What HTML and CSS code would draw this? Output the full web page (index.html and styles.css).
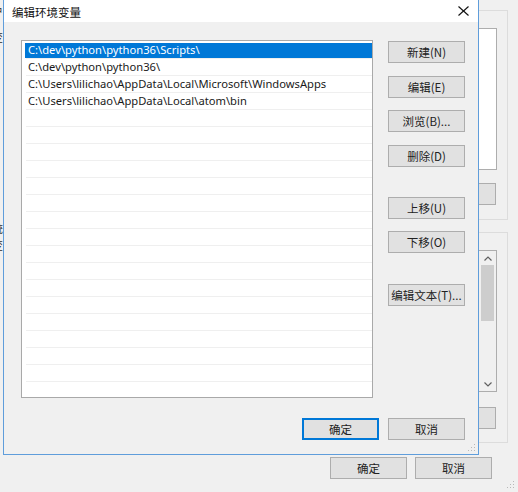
FILE: index.html
```html
<!DOCTYPE html>
<html lang="zh-CN">
<head>
<meta charset="utf-8">
<title>编辑环境变量</title>
<link rel="stylesheet" href="styles.css">
</head>
<body>
<div class="desktop">
  <div class="back-window">
    <div class="back-left">
      <div class="back-left-top">
        <div class="first">户</div><div>变</div><div>O</div><div>T</div><div>E</div><div>N</div>
      </div>
      <div class="back-left-bottom">
        <div>统</div><div>变</div><div>C</div><div>N</div><div>O</div><div>P</div><div>A</div><div>P</div><div>P</div>
      </div>
    </div>
    <div class="back-main">
      <div class="group group-1">
        <div class="back-list"></div>
        <div class="btn back-btn"></div>
      </div>
      <div class="group group-2">
        <div class="back-list back-list-scroll">
          <div class="scrollbar">
            <div class="arrow">
              <svg width="8" height="5" viewBox="0 0 8 5"><polyline points="0.5,4.5 4,1 7.5,4.5" fill="none" stroke="#606060" stroke-width="1.2"/></svg>
            </div>
            <div class="thumb"></div>
            <div class="track"></div>
            <div class="arrow">
              <svg width="8" height="5" viewBox="0 0 8 5"><polyline points="0.5,0.5 4,4 7.5,0.5" fill="none" stroke="#606060" stroke-width="1.2"/></svg>
            </div>
          </div>
        </div>
        <div class="btn back-btn back-btn-2"></div>
      </div>
      <div class="back-footer">
        <div class="btn back-footer-btn">确定</div>
        <div class="btn back-footer-btn">取消</div>
      </div>
    </div>
    <svg class="grip grip-back" width="8" height="8" viewBox="0 0 8 8">
      <rect x="6" y="0" width="1" height="1" fill="#b8b8b8"/>
      <rect x="3" y="3" width="1" height="1" fill="#b8b8b8"/><rect x="6" y="3" width="1" height="1" fill="#b8b8b8"/>
      <rect x="0" y="6" width="1" height="1" fill="#b8b8b8"/><rect x="3" y="6" width="1" height="1" fill="#b8b8b8"/><rect x="6" y="6" width="1" height="1" fill="#b8b8b8"/>
    </svg>
  </div>

  <div class="dialog">
    <div class="titlebar">
      <span class="title">编辑环境变量</span>
      <svg class="close" width="11" height="10" viewBox="0 0 11 10">
        <line x1="0.5" y1="0.5" x2="10.5" y2="9.5" stroke="#111" stroke-width="1.1"/>
        <line x1="10.5" y1="0.5" x2="0.5" y2="9.5" stroke="#111" stroke-width="1.1"/>
      </svg>
    </div>
    <div class="dialog-body">
      <div class="main">
        <div class="path-list">
          <div class="row selected"><span class="sel">C:\dev\python\python36\Scripts\</span></div>
          <div class="row">C:\dev\python\python36\</div>
          <div class="row">C:\Users\lilichao\AppData\Local\Microsoft\WindowsApps</div>
          <div class="row">C:\Users\lilichao\AppData\Local\atom\bin</div>
        </div>
        <div class="side">
          <div class="btn">新建(N)</div>
          <div class="btn m13">编辑(E)</div>
          <div class="btn m12">浏览(B)...</div>
          <div class="btn m13">删除(D)</div>
          <div class="btn m30">上移(U)</div>
          <div class="btn m12">下移(O)</div>
          <div class="btn m31">编辑文本(T)...</div>
        </div>
      </div>
      <div class="footer">
        <div class="btn focused">确定</div>
        <div class="btn">取消</div>
      </div>
    </div>
    <svg class="grip grip-dialog" width="8" height="8" viewBox="0 0 8 8">
      <rect x="6" y="0" width="1" height="1" fill="#b8b8b8"/>
      <rect x="3" y="3" width="1" height="1" fill="#b8b8b8"/><rect x="6" y="3" width="1" height="1" fill="#b8b8b8"/>
      <rect x="0" y="6" width="1" height="1" fill="#b8b8b8"/><rect x="3" y="6" width="1" height="1" fill="#b8b8b8"/><rect x="6" y="6" width="1" height="1" fill="#b8b8b8"/>
    </svg>
  </div>
</div>
</body>
</html>
```
FILE: styles.css
```css
* { box-sizing: border-box; }

body {
  margin: 0;
  font-family: "Noto Sans", "Noto Sans CJK SC", sans-serif;
  font-size: 12px;
  color: #000;
}

.desktop {
  position: relative;
  width: 518px;
  height: 492px;
  overflow: hidden;
  background: #f0f0f0;
}

/* ---------- window behind ---------- */
.back-window {
  position: relative;
  display: flex;
  width: 518px;
  height: 492px;
}

.back-left {
  width: 3px;
  overflow: hidden;
  flex: none;
}

.back-left-top,
.back-left-bottom {
  margin-left: -8px;
  width: 12px;
  font-family: "Noto Sans CJK SC", sans-serif;
  font-size: 11px;
  line-height: 17px;
  color: #333;
}

.back-left-top { padding-top: 3px; }
.back-left-top .first { margin-bottom: 9px; }
.back-left-bottom { padding-top: 106px; }

.back-main {
  flex: 1;
  display: flex;
  flex-direction: column;
  padding: 10px 10px 0 12px;
}

.group {
  border: 1px solid #dcdcdc;
  padding: 17px 10px 0 10px;
  display: flex;
  flex-direction: column;
  align-items: flex-end;
}

.group-1 { height: 210px; }
.group-2 { height: 211px; margin-top: 12px; }

.back-list {
  width: 100%;
  height: 142px;
  background: #fff;
  border: 1px solid #adadad;
}

.back-list-scroll {
  display: flex;
  justify-content: flex-end;
}

.scrollbar {
  width: 17px;
  height: 100%;
  background: #f0f0f0;
  display: flex;
  flex-direction: column;
  align-items: center;
}

.arrow {
  height: 14px;
  width: 100%;
  display: flex;
  align-items: center;
  justify-content: center;
}

.thumb {
  width: 13px;
  height: 56px;
  background: #cdcdcd;
}

.track { flex: 1; }

.back-btn {
  margin-top: 13px;
  margin-right: 1px;
}

.back-btn-2 { margin-top: 15px; }

.back-footer {
  display: flex;
  justify-content: flex-end;
  gap: 8px;
  margin-top: 14px;
  padding-right: 16px;
}

.back-footer-btn { width: 78px; }

.grip {
  position: absolute;
  right: 3px;
  bottom: 3px;
}

/* ---------- buttons ---------- */
.btn {
  width: 77px;
  height: 22px;
  background: #e1e1e1;
  border: 1px solid #adadad;
  display: flex;
  align-items: center;
  justify-content: center;
  font-family: "Noto Sans CJK SC", sans-serif;
  font-size: 11.5px;
  color: #222;
  flex: none;
}

.btn.focused {
  border-color: #0078d7;
  box-shadow: inset 0 0 0 1px #0078d7;
}

/* ---------- dialog ---------- */
.dialog {
  position: absolute;
  left: 3px;
  top: 0;
  width: 476px;
  height: 455px;
  background: #f0f0f0;
  border: 1px solid #5f9ddb;
  border-top: none;
  display: flex;
  flex-direction: column;
}

.titlebar {
  height: 22px;
  flex: none;
  background: #fff;
  display: flex;
  align-items: center;
  justify-content: space-between;
  padding: 1px 9px 0 8px;
}

.title {
  font-family: "Noto Sans CJK SC", sans-serif;
  font-size: 11.5px;
  color: #111;
}

.close { margin-top: -2px; }

.dialog-body {
  flex: 1;
  display: flex;
  flex-direction: column;
  padding: 18px 13px 13px 17px;
}

.main {
  display: flex;
  gap: 15px;
}

.path-list {
  width: 352px;
  height: 358px;
  border: 1px solid #a9a9a9;
  padding-top: 1px;
  background-color: #fff;
  background-image: repeating-linear-gradient(to bottom, transparent 0, transparent 16px, #efefef 16px, #efefef 17px);
  background-position: 4px 1px;
  background-size: 100% 100%;
  background-repeat: no-repeat;
}

.row {
  height: 17px;
  line-height: 16px;
  padding-left: 6px;
  white-space: nowrap;
  color: #1a1a1a;
  font-size: 11.2px;
}

.row.selected {
  padding: 1px 0 1px 3px;
}

.sel {
  display: block;
  height: 15px;
  line-height: 14px;
  background: #0078d7;
  color: #fff;
  padding-left: 3px;
}

.side {
  display: flex;
  flex-direction: column;
  padding-top: 1px;
}

.m12 { margin-top: 12px; }
.m13 { margin-top: 13px; }
.m30 { margin-top: 30px; }
.m31 { margin-top: 31px; }

.footer {
  display: flex;
  justify-content: flex-end;
  gap: 9px;
  margin-top: 20px;
}

.grip-dialog {
  right: 2px;
  bottom: 2px;
}
```
